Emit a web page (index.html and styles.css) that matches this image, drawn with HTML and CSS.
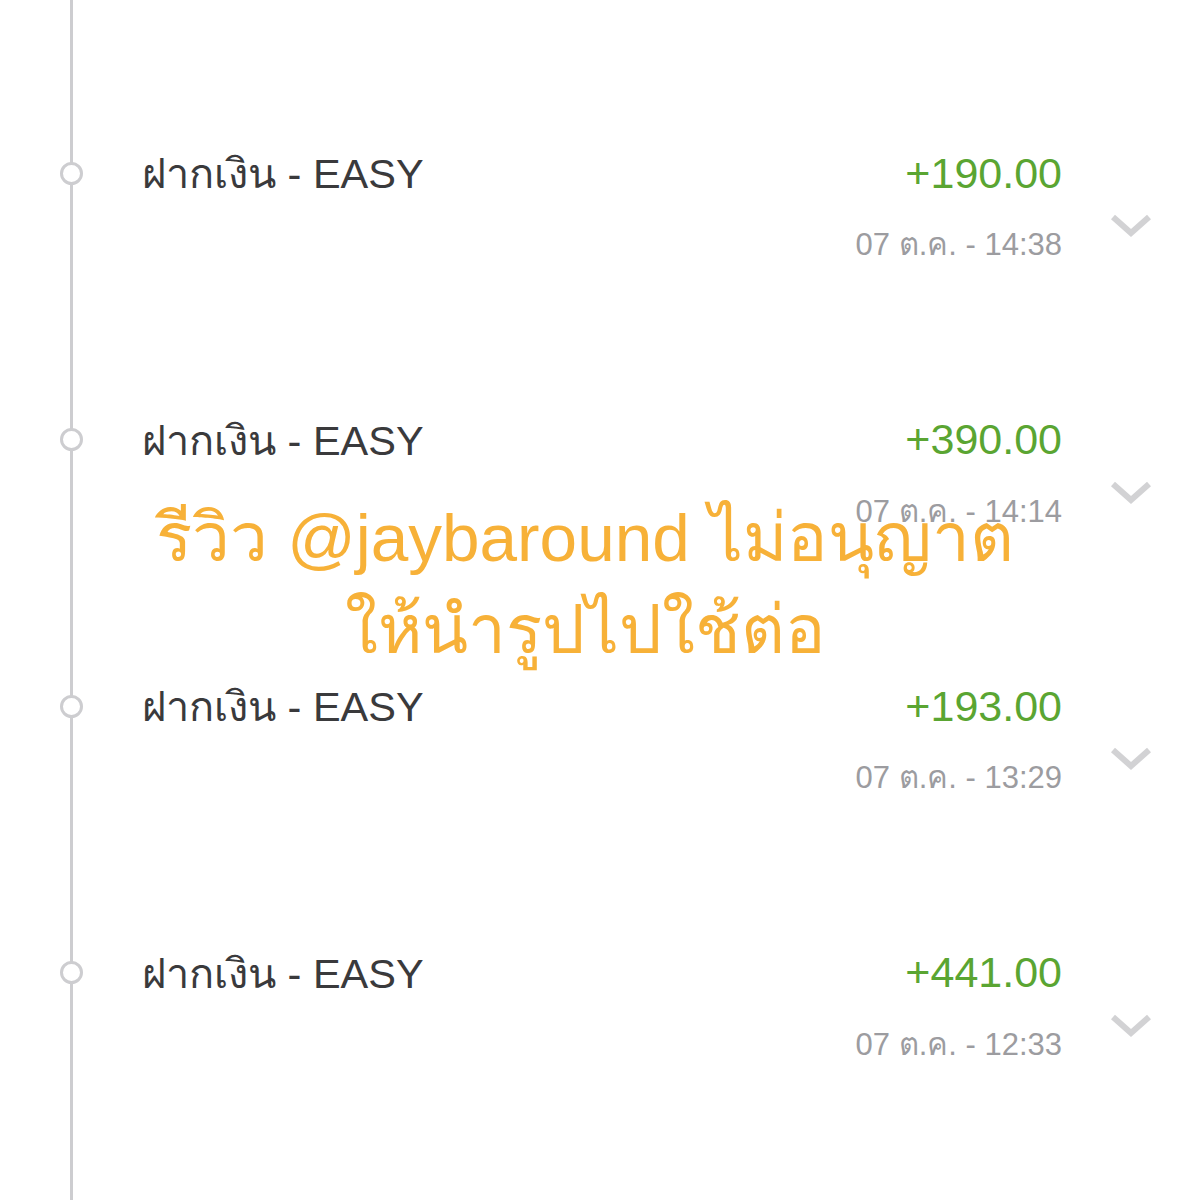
FILE: index.html
```html
<!DOCTYPE html>
<html lang="th">
<head>
<meta charset="UTF-8">
<meta name="viewport" content="width=device-width, initial-scale=1.0">
<title>รายการเดินบัญชี</title>
<link rel="stylesheet" href="styles.css">
</head>
<body>

<div class="timeline">
    <div class="row">
        <div class="marker"><span class="dot"></span></div>
        <div class="info">
            <div class="top">
                <span class="title">ฝากเงิน - EASY</span>
                <span class="amount">+190.00</span>
            </div>
            <div class="date">07 ต.ค. - 14:38</div>
        </div>
        <div class="more"><svg width="44" height="28" viewBox="0 0 44 28"><path d="M4 5 L22 21 L40 5" fill="none" stroke="#d2d2d4" stroke-width="6"/></svg></div>
    </div>
    <div class="row">
        <div class="marker"><span class="dot"></span></div>
        <div class="info">
            <div class="top">
                <span class="title">ฝากเงิน - EASY</span>
                <span class="amount">+390.00</span>
            </div>
            <div class="date">07 ต.ค. - 14:14</div>
        </div>
        <div class="more"><svg width="44" height="28" viewBox="0 0 44 28"><path d="M4 5 L22 21 L40 5" fill="none" stroke="#d2d2d4" stroke-width="6"/></svg></div>
    </div>
    <div class="row">
        <div class="marker"><span class="dot"></span></div>
        <div class="info">
            <div class="top">
                <span class="title">ฝากเงิน - EASY</span>
                <span class="amount">+193.00</span>
            </div>
            <div class="date">07 ต.ค. - 13:29</div>
        </div>
        <div class="more"><svg width="44" height="28" viewBox="0 0 44 28"><path d="M4 5 L22 21 L40 5" fill="none" stroke="#d2d2d4" stroke-width="6"/></svg></div>
    </div>
    <div class="row">
        <div class="marker"><span class="dot"></span></div>
        <div class="info">
            <div class="top">
                <span class="title">ฝากเงิน - EASY</span>
                <span class="amount">+441.00</span>
            </div>
            <div class="date">07 ต.ค. - 12:33</div>
        </div>
        <div class="more"><svg width="44" height="28" viewBox="0 0 44 28"><path d="M4 5 L22 21 L40 5" fill="none" stroke="#d2d2d4" stroke-width="6"/></svg></div>
    </div>
</div>

<!-- watermark over the list -->
<div class="watermark">
    รีวิว @jaybaround ไม่อนุญาต<br>
    ให้นำรูปไปใช้ต่อ
</div>

</body>
</html>
```

FILE: styles.css
```css
body, html {
    margin: 0;
    padding: 0;
    background: #fff;
    font-family: "Liberation Sans", "Noto Sans", sans-serif;
    height: 100%;
    overflow: hidden;
}
.timeline {
    height: 1200px;
    padding-top: 143px;
    box-sizing: border-box;
    background: linear-gradient(#cdcdd0, #cdcdd0) 70px 0 / 3px 100% no-repeat;
}
.row {
    display: flex;
    height: 266.67px;
}
.marker {
    width: 142px;
    height: 60px;
    display: flex;
    align-items: center;
    justify-content: center;
    flex-shrink: 0;
}
.dot {
    width: 17px;
    height: 17px;
    border: 3px solid #cdcdd0;
    border-radius: 50%;
    background: #fff;
}
.info {
    flex: 1;
}
.top {
    height: 60px;
    display: flex;
    align-items: center;
    justify-content: space-between;
}
.title {
    font-size: 41.5px;
    color: #3a3a3c;
}
.amount {
    font-size: 43px;
    color: #5aa532;
}
.date {
    text-align: right;
    font-size: 31px;
    color: #9c9ca0;
    margin-top: 16px;
}
.more {
    width: 138px;
    flex-shrink: 0;
    display: flex;
    justify-content: center;
    padding-top: 69px;
    height: 28px;
}
.watermark {
    position: absolute;
    left: 0;
    right: 30px;
    top: 492px;
    text-align: center;
    font-size: 67.5px;
    line-height: 92px;
    color: #f7b138;
}
```
